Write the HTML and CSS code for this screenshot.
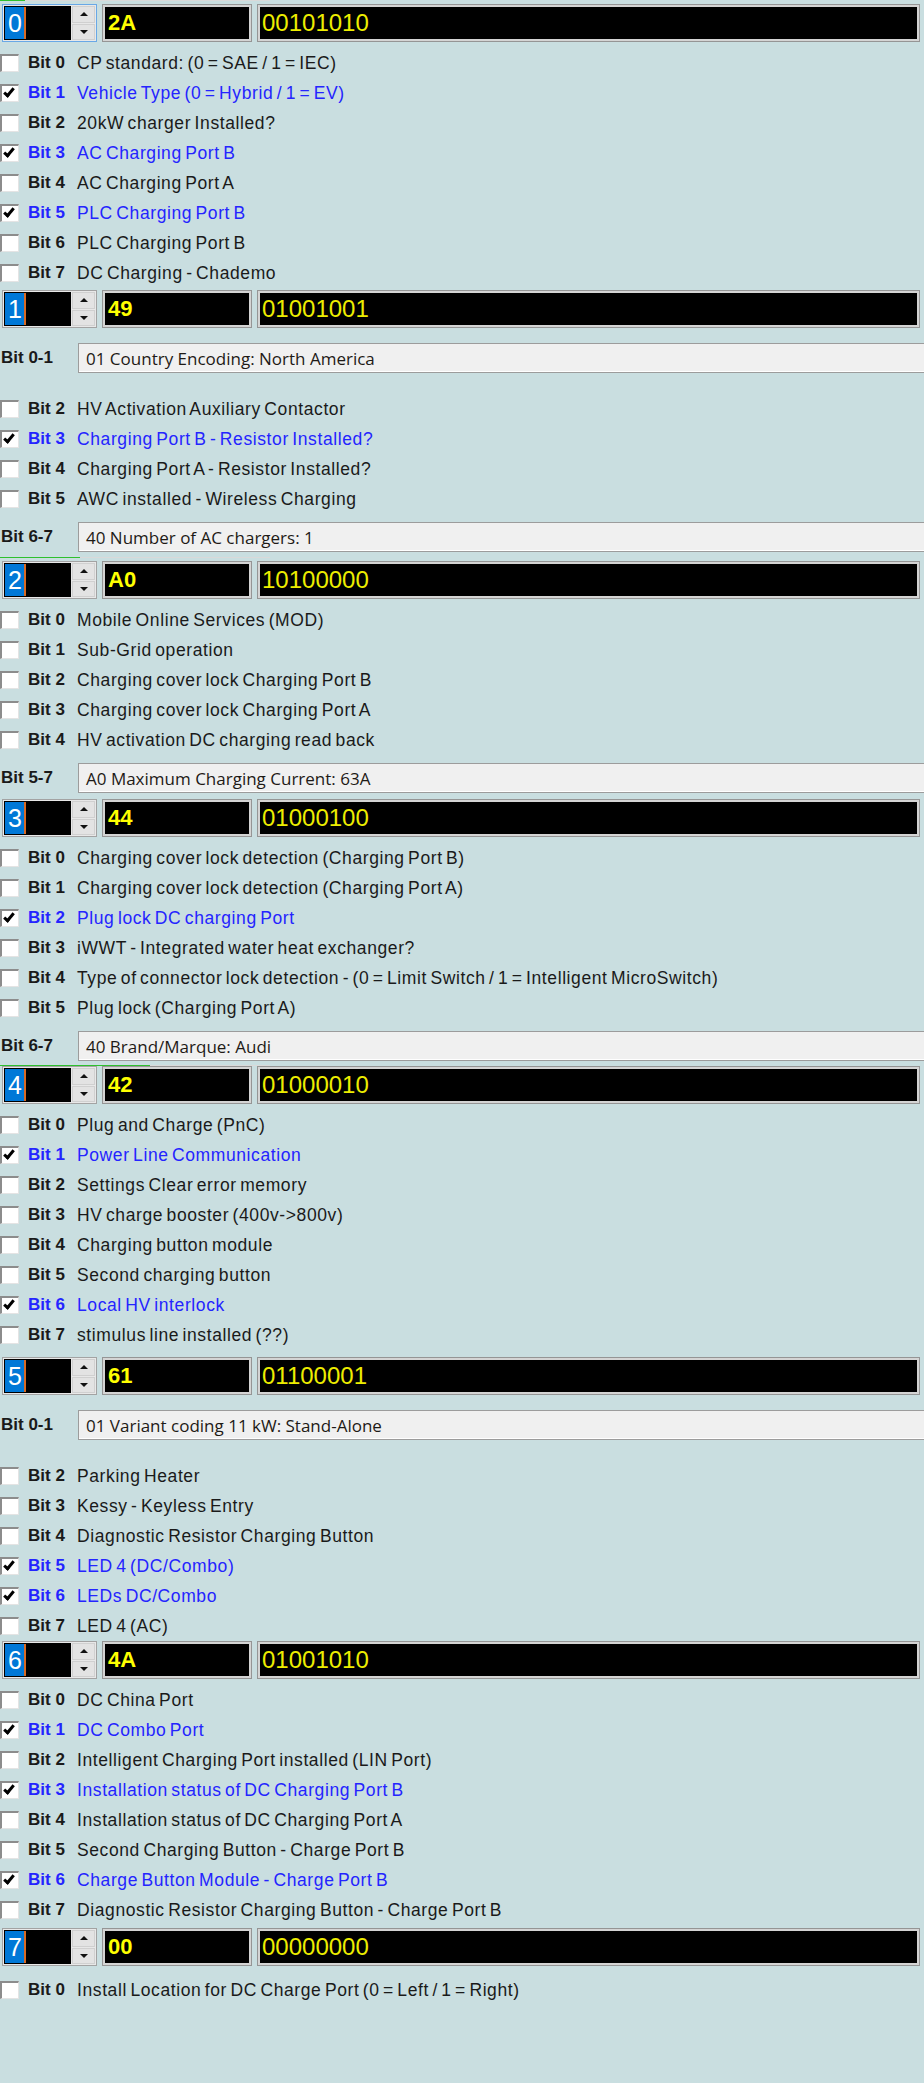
FILE: index.html
```html
<!DOCTYPE html>
<html lang="en">

<head>
    <meta charset="UTF-8">
    <meta name="viewport" content="width=device-width, initial-scale=1.0">
    <title>Coding bytes</title>
    <link rel="stylesheet" href="styles.css">
</head>

<body>
    <div id="page">

        <div class="seam top"></div>

        <!-- byte 0 -->
        <div class="hdr" id="b0">
            <div class="spin focus">
                <div class="num"><span class="sel">0</span></div>
                <div class="arrows"><span><i class="up"></i></span><span><i class="down"></i></span></div>
            </div>
            <div class="hex">2A</div>
            <div class="bin">00101010</div>
        </div>
        <div class="row"><span class="cb"></span><span class="bit">Bit 0</span><span class="txt">CP standard: (0 = SAE / 1 = IEC)</span></div>
        <div class="row on"><span class="cb checked"></span><span class="bit">Bit 1</span><span class="txt">Vehicle Type (0 = Hybrid / 1 = EV)</span></div>
        <div class="row"><span class="cb"></span><span class="bit">Bit 2</span><span class="txt">20kW charger Installed?</span></div>
        <div class="row on"><span class="cb checked"></span><span class="bit">Bit 3</span><span class="txt">AC Charging Port B</span></div>
        <div class="row"><span class="cb"></span><span class="bit">Bit 4</span><span class="txt">AC Charging Port A</span></div>
        <div class="row on"><span class="cb checked"></span><span class="bit">Bit 5</span><span class="txt">PLC Charging Port B</span></div>
        <div class="row"><span class="cb"></span><span class="bit">Bit 6</span><span class="txt">PLC Charging Port B</span></div>
        <div class="row"><span class="cb"></span><span class="bit">Bit 7</span><span class="txt">DC Charging - Chademo</span></div>

        <!-- byte 1 -->
        <div class="hdr" id="b1">
            <div class="spin">
                <div class="num"><span class="sel">1</span></div>
                <div class="arrows"><span><i class="up"></i></span><span><i class="down"></i></span></div>
            </div>
            <div class="hex">49</div>
            <div class="bin">01001001</div>
        </div>
        <div class="combo-row first"><span class="bit">Bit 0-1</span><div class="combo">01 Country Encoding: North America</div></div>
        <div class="row"><span class="cb"></span><span class="bit">Bit 2</span><span class="txt">HV Activation Auxiliary Contactor</span></div>
        <div class="row on"><span class="cb checked"></span><span class="bit">Bit 3</span><span class="txt">Charging Port B - Resistor Installed?</span></div>
        <div class="row"><span class="cb"></span><span class="bit">Bit 4</span><span class="txt">Charging Port A - Resistor Installed?</span></div>
        <div class="row"><span class="cb"></span><span class="bit">Bit 5</span><span class="txt">AWC installed - Wireless Charging</span></div>
        <div class="combo-row last"><span class="bit">Bit 6-7</span><div class="combo">40 Number of AC chargers: 1</div></div>

        <!-- byte 2 -->
        <div class="seam"></div>
        <div class="hdr" id="b2">
            <div class="spin">
                <div class="num"><span class="sel">2</span></div>
                <div class="arrows"><span><i class="up"></i></span><span><i class="down"></i></span></div>
            </div>
            <div class="hex">A0</div>
            <div class="bin">10100000</div>
        </div>
        <div class="row"><span class="cb"></span><span class="bit">Bit 0</span><span class="txt">Mobile Online Services (MOD)</span></div>
        <div class="row"><span class="cb"></span><span class="bit">Bit 1</span><span class="txt">Sub-Grid operation</span></div>
        <div class="row"><span class="cb"></span><span class="bit">Bit 2</span><span class="txt">Charging cover lock Charging Port B</span></div>
        <div class="row"><span class="cb"></span><span class="bit">Bit 3</span><span class="txt">Charging cover lock Charging Port A</span></div>
        <div class="row"><span class="cb"></span><span class="bit">Bit 4</span><span class="txt">HV activation DC charging read back</span></div>
        <div class="combo-row last"><span class="bit">Bit 5-7</span><div class="combo">A0 Maximum Charging Current: 63A</div></div>

        <!-- byte 3 -->
        <div class="hdr" id="b3">
            <div class="spin">
                <div class="num"><span class="sel">3</span></div>
                <div class="arrows"><span><i class="up"></i></span><span><i class="down"></i></span></div>
            </div>
            <div class="hex">44</div>
            <div class="bin">01000100</div>
        </div>
        <div class="row"><span class="cb"></span><span class="bit">Bit 0</span><span class="txt">Charging cover lock detection (Charging Port B)</span></div>
        <div class="row"><span class="cb"></span><span class="bit">Bit 1</span><span class="txt">Charging cover lock detection (Charging Port A)</span></div>
        <div class="row on"><span class="cb checked"></span><span class="bit">Bit 2</span><span class="txt">Plug lock DC charging Port</span></div>
        <div class="row"><span class="cb"></span><span class="bit">Bit 3</span><span class="txt">iWWT - Integrated water heat exchanger?</span></div>
        <div class="row"><span class="cb"></span><span class="bit">Bit 4</span><span class="txt">Type of connector lock detection - (0 = Limit Switch / 1 = Intelligent MicroSwitch)</span></div>
        <div class="row"><span class="cb"></span><span class="bit">Bit 5</span><span class="txt">Plug lock (Charging Port A)</span></div>
        <div class="combo-row last"><span class="bit">Bit 6-7</span><div class="combo">40 Brand/Marque: Audi</div></div>

        <!-- byte 4 -->
        <div class="seam wide"></div>
        <div class="hdr" id="b4">
            <div class="spin">
                <div class="num"><span class="sel">4</span></div>
                <div class="arrows"><span><i class="up"></i></span><span><i class="down"></i></span></div>
            </div>
            <div class="hex">42</div>
            <div class="bin">01000010</div>
        </div>
        <div class="row"><span class="cb"></span><span class="bit">Bit 0</span><span class="txt">Plug and Charge (PnC)</span></div>
        <div class="row on"><span class="cb checked"></span><span class="bit">Bit 1</span><span class="txt">Power Line Communication</span></div>
        <div class="row"><span class="cb"></span><span class="bit">Bit 2</span><span class="txt">Settings Clear error memory</span></div>
        <div class="row"><span class="cb"></span><span class="bit">Bit 3</span><span class="txt">HV charge booster (400v-&gt;800v)</span></div>
        <div class="row"><span class="cb"></span><span class="bit">Bit 4</span><span class="txt">Charging button module</span></div>
        <div class="row"><span class="cb"></span><span class="bit">Bit 5</span><span class="txt">Second charging button</span></div>
        <div class="row on"><span class="cb checked"></span><span class="bit">Bit 6</span><span class="txt">Local HV interlock</span></div>
        <div class="row"><span class="cb"></span><span class="bit">Bit 7</span><span class="txt">stimulus line installed (??)</span></div>

        <!-- byte 5 -->
        <div class="hdr" id="b5">
            <div class="spin">
                <div class="num"><span class="sel">5</span></div>
                <div class="arrows"><span><i class="up"></i></span><span><i class="down"></i></span></div>
            </div>
            <div class="hex">61</div>
            <div class="bin">01100001</div>
        </div>
        <div class="combo-row first"><span class="bit">Bit 0-1</span><div class="combo">01 Variant coding 11 kW: Stand-Alone</div></div>
        <div class="row"><span class="cb"></span><span class="bit">Bit 2</span><span class="txt">Parking Heater</span></div>
        <div class="row"><span class="cb"></span><span class="bit">Bit 3</span><span class="txt">Kessy - Keyless Entry</span></div>
        <div class="row"><span class="cb"></span><span class="bit">Bit 4</span><span class="txt">Diagnostic Resistor Charging Button</span></div>
        <div class="row on"><span class="cb checked"></span><span class="bit">Bit 5</span><span class="txt">LED 4 (DC/Combo)</span></div>
        <div class="row on"><span class="cb checked"></span><span class="bit">Bit 6</span><span class="txt">LEDs DC/Combo</span></div>
        <div class="row"><span class="cb"></span><span class="bit">Bit 7</span><span class="txt">LED 4 (AC)</span></div>

        <!-- byte 6 -->
        <div class="hdr" id="b6">
            <div class="spin">
                <div class="num"><span class="sel">6</span></div>
                <div class="arrows"><span><i class="up"></i></span><span><i class="down"></i></span></div>
            </div>
            <div class="hex">4A</div>
            <div class="bin">01001010</div>
        </div>
        <div class="row"><span class="cb"></span><span class="bit">Bit 0</span><span class="txt">DC China Port</span></div>
        <div class="row on"><span class="cb checked"></span><span class="bit">Bit 1</span><span class="txt">DC Combo Port</span></div>
        <div class="row"><span class="cb"></span><span class="bit">Bit 2</span><span class="txt">Intelligent Charging Port installed (LIN Port)</span></div>
        <div class="row on"><span class="cb checked"></span><span class="bit">Bit 3</span><span class="txt">Installation status of DC Charging Port B</span></div>
        <div class="row"><span class="cb"></span><span class="bit">Bit 4</span><span class="txt">Installation status of DC Charging Port A</span></div>
        <div class="row"><span class="cb"></span><span class="bit">Bit 5</span><span class="txt">Second Charging Button - Charge Port B</span></div>
        <div class="row on"><span class="cb checked"></span><span class="bit">Bit 6</span><span class="txt">Charge Button Module - Charge Port B</span></div>
        <div class="row"><span class="cb"></span><span class="bit">Bit 7</span><span class="txt">Diagnostic Resistor Charging Button - Charge Port B</span></div>

        <!-- byte 7 -->
        <div class="hdr" id="b7">
            <div class="spin">
                <div class="num"><span class="sel">7</span></div>
                <div class="arrows"><span><i class="up"></i></span><span><i class="down"></i></span></div>
            </div>
            <div class="hex">00</div>
            <div class="bin">00000000</div>
        </div>
        <div class="row"><span class="cb"></span><span class="bit">Bit 0</span><span class="txt">Install Location for DC Charge Port (0 = Left / 1 = Right)</span></div>

    </div>
</body>

</html>
```

FILE: styles.css
```css
*,
*::after,
*::before {
    box-sizing: border-box;
}

body {
    margin: 0;
    width: 924px;
    overflow: hidden;
    background-color: #c9dee0;
    font-family: "Liberation Sans", Arial, sans-serif;
    font-size: 17px;
    color: #1a1a1a;
}

#page {
    display: flex;
    flex-direction: column;
}

/* byte header: spin box, hex and binary fields */
.hdr {
    display: flex;
    flex-shrink: 0;
    height: 38px;
    margin: 2px 0 6px;
}

#b0 { margin-top: 3px; }
#b3 { margin-top: -1px; }
#b4 { margin-top: -2px; }
#b5 { margin-top: 7px; }
#b6 { margin-top: 0; }
#b7 { margin-top: 3px; margin-bottom: 9px; }

.spin {
    display: flex;
    margin-left: 2px;
    width: 95px;
    padding: 1px;
    border: 1px solid #a3a3a3;
    background: #e8e8e8;
}

.spin.focus {
    border-color: #69a8e6;
}

.num {
    width: 68px;
    padding: 1px 0 1px 1px;
    background: #000;
    display: flex;
}

.sel {
    display: flex;
    align-items: center;
    padding: 0 2px 0 3px;
    background: #0078d7;
    color: #fff;
    font-size: 25px;
    border-right: 2px solid #d86a24;
}

.arrows {
    width: 23px;
    margin-left: 1px;
    display: flex;
    flex-direction: column;
    gap: 1px;
}

.arrows span {
    flex: 1;
    display: flex;
    align-items: center;
    justify-content: center;
    background: #e3e3e3;
    border: 1px solid #d0d0d0;
}

.arrows i {
    width: 0;
    height: 0;
    border-left: 4px solid transparent;
    border-right: 4px solid transparent;
}

.arrows i.up {
    border-bottom: 4px solid #111;
}

.arrows i.down {
    border-top: 4px solid #111;
}

.hex,
.bin {
    display: flex;
    align-items: center;
    background: #000;
    border: 1px solid #959595;
    box-shadow: inset 0 0 0 2px #d4d4d4;
}

.hex {
    margin-left: 5px;
    width: 150px;
    padding-left: 5px;
    font-size: 22px;
    font-weight: bold;
    color: #ffff00;
}

.bin {
    margin-left: 5px;
    width: 663px;
    padding-left: 4px;
    font-size: 24px;
    color: #eded00;
}

/* checkbox rows */
.row {
    display: flex;
    flex-shrink: 0;
    align-items: center;
    height: 30px;
}

.cb {
    width: 19px;
    height: 18px;
    margin-right: 9px;
    background: #fff;
    border-top: 2px solid #8c8c8c;
    border-left: 2px solid #8c8c8c;
    border-right: 1px solid #e4e4e4;
    border-bottom: 1px solid #e4e4e4;
    position: relative;
}

.cb.checked::after {
    content: "";
    position: absolute;
    left: 4px;
    top: 0;
    width: 6px;
    height: 11px;
    border-right: 3px solid #000;
    border-bottom: 3px solid #000;
    transform: rotate(40deg);
}

.bit {
    width: 49px;
    font-weight: bold;
}

.txt {
    font-size: 17.5px;
    letter-spacing: 0.6px;
    word-spacing: -2px;
}

.row.on {
    color: #2424ff;
}

/* combo rows */
.combo-row {
    display: flex;
    flex-shrink: 0;
    align-items: center;
    height: 30px;
}

.combo-row.first {
    margin: 9px 0 21px;
}

.combo-row.last {
    margin: 8px 0 7px;
}

.combo-row .bit {
    width: 78px;
    padding-left: 1px;
}

.combo {
    flex: 1;
    height: 30px;
    margin-right: -8px;
    display: flex;
    align-items: center;
    padding-left: 7px;
    background: #f0f0f0;
    border: 1px solid #9c9c9c;
    box-shadow: inset 0 -1px 0 #fff;
    font-family: "Open Sans", "Noto Sans", sans-serif;
    font-size: 17px;
    color: #1e1a16;
}

/* thin coloured seams left over between the stacked captures */
.seam {
    flex-shrink: 0;
    height: 1px;
    width: 270px;
    margin: -2px 0 1px;
    background: linear-gradient(to right, #2ec02e 80px, #d9d9d9 80px);
}

.seam.top {
    margin: 0;
    background: linear-gradient(to right, #2ec02e 25px, #d9d9d9 25px);
}

.seam.wide {
    margin: -3px 0 2px;
    background: linear-gradient(to right, #2ec02e 150px, #d9d9d9 150px);
}
```
